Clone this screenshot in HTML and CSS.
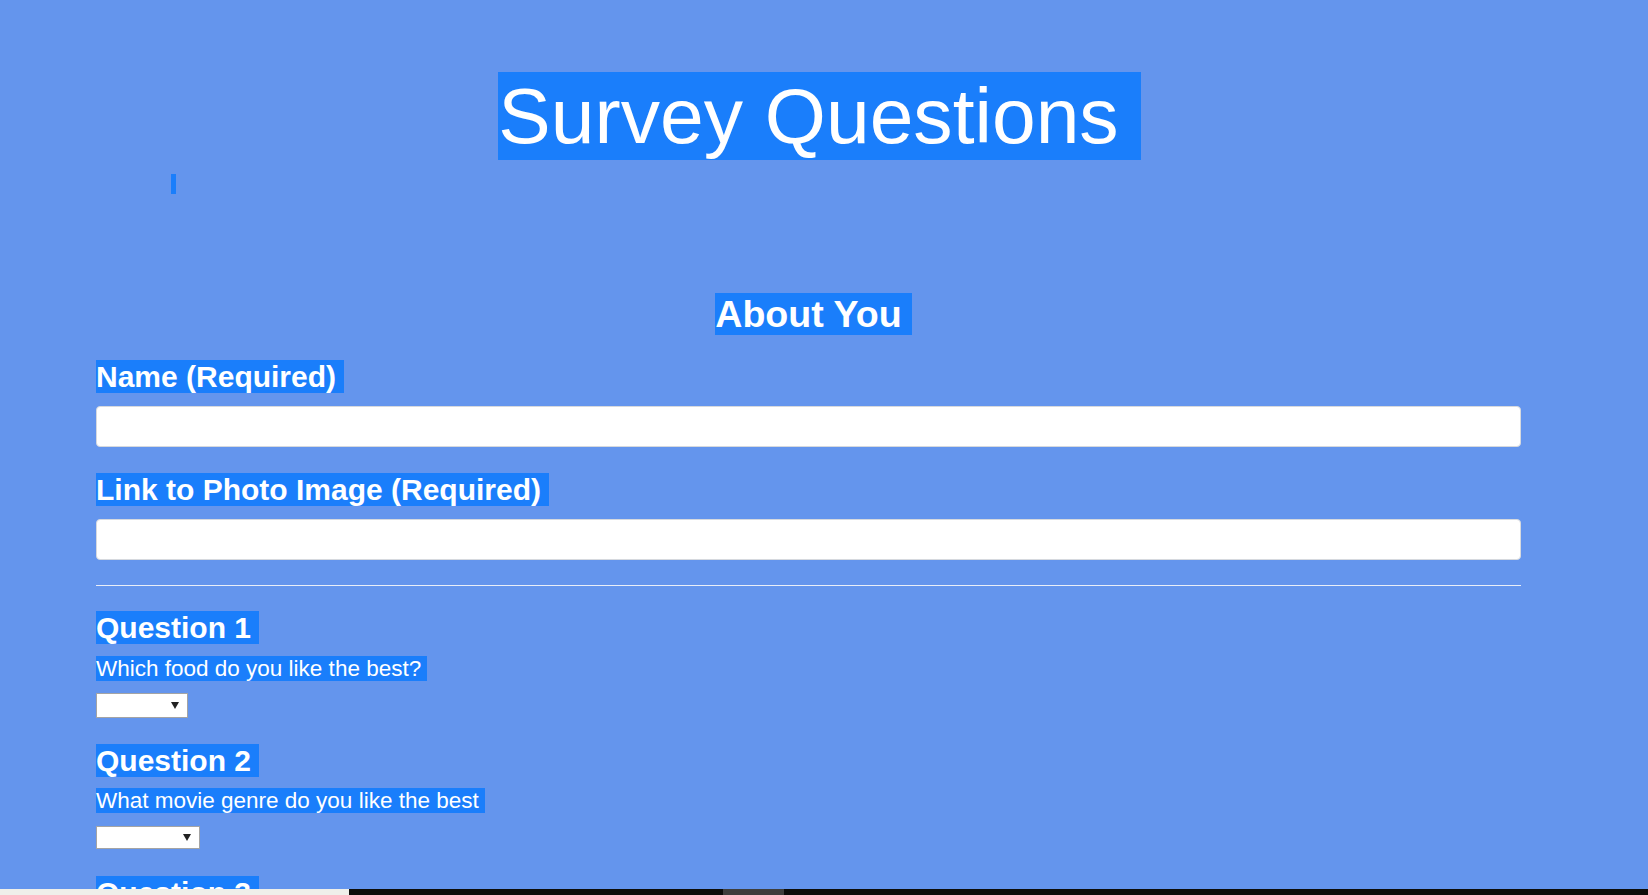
FILE: index.html
```html
<!DOCTYPE html>
<html lang="en">
<head>
<meta charset="utf-8">
<title>Survey Questions</title>
<link rel="stylesheet" href="styles.css">
</head>
<body>
<main class="page">
  <h1 class="title"><span class="hl hl-hang">Survey Questions</span></h1>
  <p class="caret"><span class="caret-mark"></span></p>

  <form class="survey">
    <h2 class="section"><span class="hl hl-hang">About You</span></h2>

    <label class="label label-first" for="name"><span class="hl">Name (Required)</span></label>
    <input class="field" id="name" type="text">

    <label class="label" for="photo"><span class="hl">Link to Photo Image (Required)</span></label>
    <input class="field" id="photo" type="text">

    <hr class="rule">

    <h3 class="question q-first"><span class="hl">Question 1</span></h3>
    <p class="prompt"><span class="hl">Which food do you like the best?</span></p>
    <div class="select select-1" role="combobox" aria-label="Question 1">
      <svg class="arrow" width="8" height="7" viewBox="0 0 8 7"><path d="M0 0H8L4 7Z" fill="#222"/></svg>
    </div>

    <h3 class="question"><span class="hl">Question 2</span></h3>
    <p class="prompt prompt-2"><span class="hl">What movie genre do you like the best</span></p>
    <div class="select select-2" role="combobox" aria-label="Question 2">
      <svg class="arrow" width="8" height="7" viewBox="0 0 8 7"><path d="M0 0H8L4 7Z" fill="#222"/></svg>
    </div>

    <h3 class="question q-3"><span class="hl">Question 3</span></h3>
  </form>
</main>

<div class="taskbar">
  <div class="tb-light"></div>
  <div class="tb-dark"></div>
  <div class="tb-grey"></div>
  <div class="tb-dark tb-rest"></div>
</div>
</body>
</html>
```

FILE: styles.css
```css
html, body {
  margin: 0;
  padding: 0;
}

body {
  background: #6495ed;
  font-family: "Liberation Sans", Arial, sans-serif;
  color: #fff;
  height: 895px;
  overflow: hidden;
}

.page {
  width: 1425px;
  margin-left: 96px;
  display: flex;
  flex-direction: column;
}

.hl {
  background: #1a7efb;
  color: #fff;
  padding-right: 0.278em;
  white-space: nowrap;
}

.hl-hang {
  margin-right: -0.278em;
}

.title {
  margin: 72px 0 0;
  display: flex;
  justify-content: center;
  font-size: 78.6px;
  font-weight: normal;
  line-height: 88px;
}

.caret {
  margin: 14px 0 0;
  display: flex;
  padding-left: 75px;
}

.caret-mark {
  width: 5px;
  height: 20px;
  background: #1a7efb;
}

.survey {
  display: flex;
  flex-direction: column;
  align-items: flex-start;
}

.section {
  margin: 99px 0 0;
  align-self: stretch;
  display: flex;
  justify-content: center;
  font-size: 37.6px;
  line-height: 42px;
  font-weight: bold;
}

.label {
  margin-top: 26px;
  display: flex;
  font-size: 30px;
  line-height: 33px;
  font-weight: bold;
}

.label-first {
  margin-top: 25px;
}

.field {
  margin: 13px 0 0;
  box-sizing: border-box;
  width: 1425px;
  height: 41px;
  border: 1px solid #d6d9de;
  border-radius: 4px;
  background: #fff;
  padding: 0 10px;
  font: inherit;
  font-size: 18px;
}

.rule {
  margin: 25px 0 0;
  width: 1425px;
  height: 0;
  border: 0;
  border-top: 1px solid #e9eef8;
}

.question {
  margin: 26px 0 0;
  display: flex;
  font-size: 30px;
  line-height: 33px;
  font-weight: bold;
}

.q-first {
  margin-top: 25px;
}

.q-3 {
  margin-top: 27px;
}

.prompt {
  margin: 12px 0 0;
  display: flex;
  font-size: 22.5px;
  line-height: 25px;
}

.prompt-2 {
  margin-top: 11px;
}

.select {
  margin-top: 12px;
  box-sizing: border-box;
  display: flex;
  justify-content: flex-end;
  align-items: center;
  padding-right: 8px;
  background: #fff;
  border: 1px solid #a4a4a4;
}

.select-1 {
  width: 92px;
  height: 25px;
}

.select-2 {
  margin-top: 13px;
  width: 104px;
  height: 23px;
}

.taskbar {
  position: fixed;
  left: 0;
  right: 0;
  bottom: 0;
  height: 6px;
  display: flex;
}

.tb-light {
  width: 349px;
  background: #efefea;
}

.tb-dark {
  width: 374px;
  background: #0c0d0a;
}

.tb-grey {
  width: 61px;
  background: #3e3e3c;
}

.tb-rest {
  flex: 1;
}
```
